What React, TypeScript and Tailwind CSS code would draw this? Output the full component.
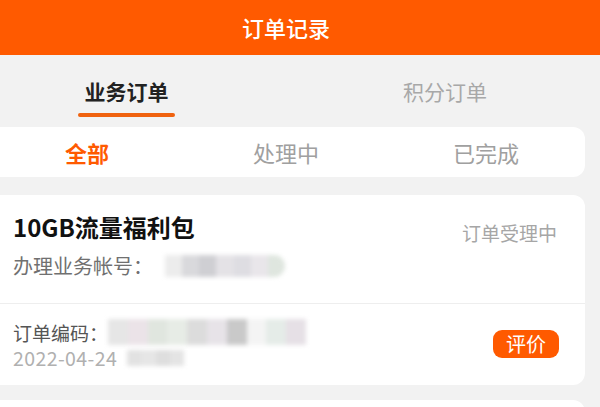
const font = { fontFamily: '"Noto Sans CJK SC", "Noto Sans", sans-serif' };

function Mosaic({ cells, className }: { cells: string[]; className: string }) {
  return (
    <div className={"flex overflow-hidden blur-[2px] " + className}>
      {cells.map((c, i) => (
        <div key={i} className="h-full flex-1" style={{ backgroundColor: c }} />
      ))}
    </div>
  );
}

export default function App() {
  return (
    <main className="h-[407px] w-[600px] overflow-hidden bg-[#f2f2f2]" style={font}>
      <header className="flex h-[55px] items-center justify-center bg-[#ff5a00] pr-[28px]">
        <h1 className="text-[22px] font-medium text-white">订单记录</h1>
      </header>

      <div className="flex h-[72px] items-start">
        <div className="ml-[78px] flex w-[97px] flex-col items-center pt-[23px]">
          <span className="text-[21px] leading-[27px] font-bold text-[#222]">业务订单</span>
          <span className="mt-[8px] h-[4px] w-full rounded-full bg-[#f0620f]" />
        </div>
        <div className="ml-auto mr-[113px] pt-[23px]">
          <span className="text-[21px] leading-[27px] text-[#a8a8a8]">积分订单</span>
        </div>
      </div>

      <div className="mr-[15px] flex h-[50px] items-center rounded-r-xl bg-white text-[22px]">
        <span className="w-[174px] text-center font-bold text-[#ff5a00]">全部</span>
        <span className="w-[224px] text-center text-[#a0a0a0]">处理中</span>
        <span className="w-[176px] text-center text-[#a0a0a0]">已完成</span>
      </div>

      <section className="mt-[18px] mr-[15px] rounded-r-xl bg-white">
        <div className="flex items-start justify-between pt-[16px] pb-[24px] pl-[13px] pr-[28px]">
          <div>
            <h2 className="text-[24px] leading-[31px] font-bold text-[#111]">10GB流量福利包</h2>
            <div className="mt-[10px] flex items-center">
              <span className="text-[20px] leading-[27px] text-[#707070]">办理业务帐号：</span>
              <Mosaic
                className="ml-[12px] h-[22px] w-[120px] rounded-r-full"
                cells={["#ececec", "#d9d9dc", "#cfcfd3", "#e4e2e6", "#dedde2", "#e9e6ea", "#dfe6df"]}
              />
            </div>
          </div>
          <span className="mt-[9px] text-[19px] leading-[26px] text-[#a6a6a6]">订单受理中</span>
        </div>

        <div className="h-px bg-[#eeeeee]" />

        <div className="flex items-center justify-between pt-[15px] pb-[16px] pl-[13px] pr-[26px]">
          <div>
            <div className="flex items-center">
              <span className="text-[19px] leading-[25px] text-[#555]">订单编码：</span>
              <Mosaic
                className="h-[26px] w-[198px]"
                cells={["#e6e6e6", "#ebe3e8", "#e0e6df", "#e7ece6", "#dcdcdc", "#e7e3e8", "#c9c9c9", "#f4f4f4", "#e5ece8", "#e6e0e6"]}
              />
            </div>
            <div className="mt-px flex items-center">
              <span className="text-[19.5px] leading-[23px] tracking-[0.4px] text-[#b0b0b0]">2022-04-24</span>
              <Mosaic
                className="ml-[10px] h-[16px] w-[57px]"
                cells={["#e2e2e2", "#e6e6e6", "#dedede", "#e4e4e4"]}
              />
            </div>
          </div>
          <button className="h-[28px] w-[66px] rounded-[9px] bg-[#ff5a00] text-[20px] leading-none text-white">
            评价
          </button>
        </div>
      </section>

      <section className="mt-[15px] mr-[15px] h-[60px] rounded-r-xl bg-white" />
    </main>
  );
}
